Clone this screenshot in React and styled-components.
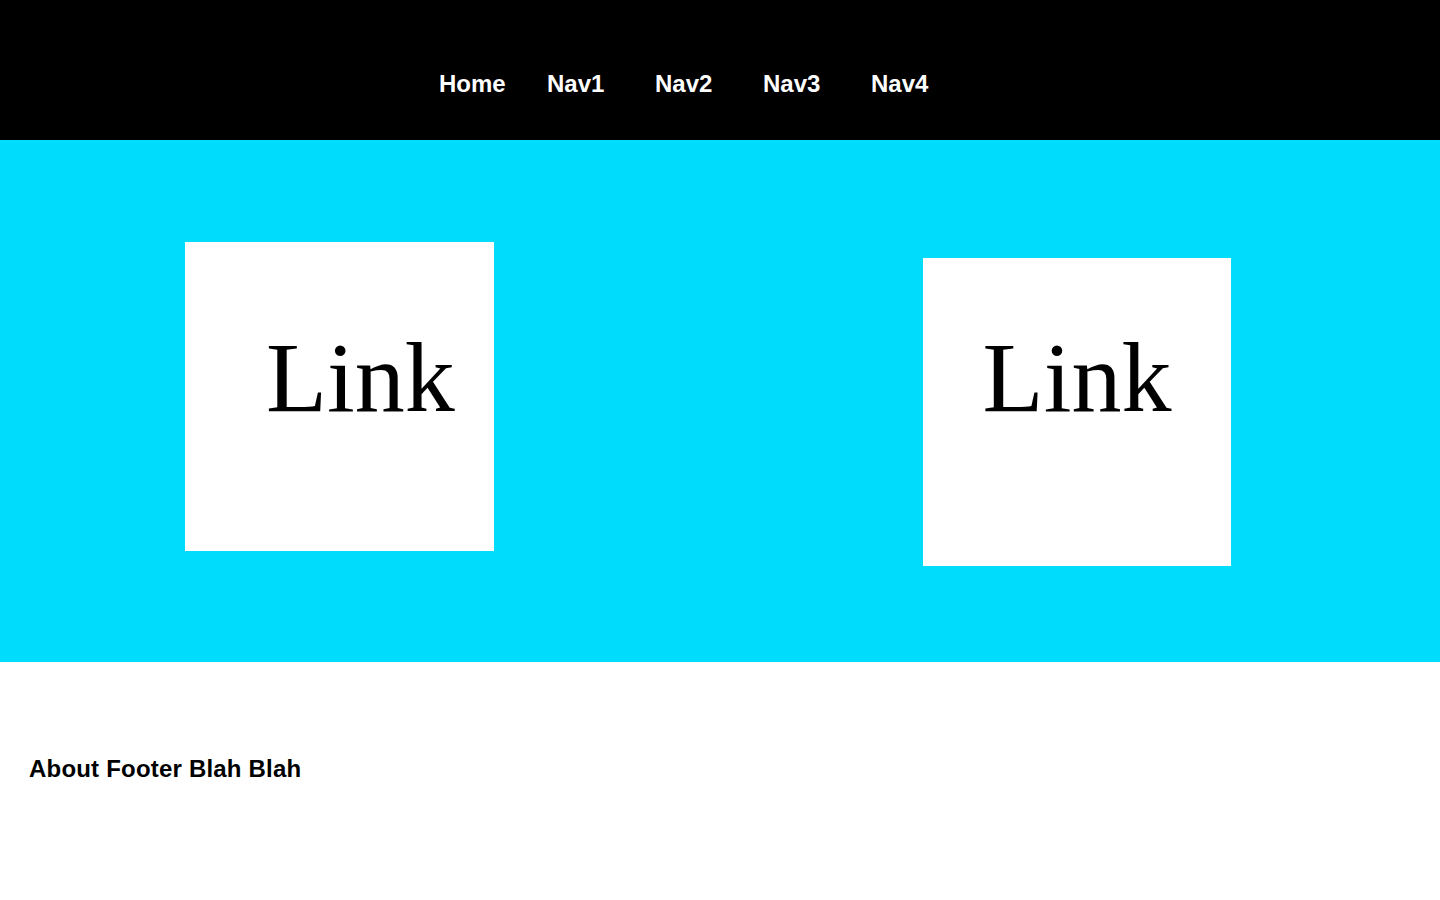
import React from "react";
import styled, { createGlobalStyle } from "styled-components";

const GlobalStyle = createGlobalStyle`
  html, body {
    margin: 0;
    padding: 0;
    background: #ffffff;
  }
  body {
    font-family: "Liberation Sans", Arial, sans-serif;
  }
  * {
    box-sizing: border-box;
  }
`;

// Top navigation bar
const Header = styled.header`
  height: 140px;
  background: #000000;
  padding: 72px 0 0 439px;
`;

const NavList = styled.ul`
  display: flex;
  list-style: none;
  margin: 0;
  padding: 0;
`;

const NavItem = styled.li`
  width: 108px;
  font-size: 24px;
  line-height: 24px;
  font-weight: bold;
  color: #ffffff;
  white-space: nowrap;
`;

// Cyan hero with the two link tiles
const Hero = styled.section`
  height: 522px;
  background: #00ddfc;
  display: flex;
  align-items: flex-start;
  padding: 102px 0 0 185px;
  gap: 429px;
`;

const Tile = styled.div`
  width: ${(p) => p.$size}px;
  height: ${(p) => p.$size}px;
  margin-top: ${(p) => p.$offset || 0}px;
  background: #ffffff;
  padding: ${(p) => p.$textTop}px 0 0 ${(p) => p.$textLeft || 0}px;
  text-align: ${(p) => (p.$centered ? "center" : "left")};
  font-family: "Liberation Serif", "Times New Roman", serif;
  font-size: 100px;
  line-height: 100px;
  color: #000000;
`;

// Footer
const Footer = styled.footer`
  height: 238px;
  padding: 95px 0 0 29px;
`;

const FooterText = styled.h3`
  margin: 0;
  font-size: 24px;
  line-height: 24px;
  font-weight: bold;
  letter-spacing: 0.2px;
  color: #000000;
`;

const navItems = ["Home", "Nav1", "Nav2", "Nav3", "Nav4"];

export default function App() {
  return (
    <>
      <GlobalStyle />
      <Header>
        <NavList>
          {navItems.map((item) => (
            <NavItem key={item}>{item}</NavItem>
          ))}
        </NavList>
      </Header>
      <Hero>
        <Tile $size={309} $textTop={86} $textLeft={81}>
          Link
        </Tile>
        <Tile $size={308} $offset={16} $textTop={70} $centered>
          Link
        </Tile>
      </Hero>
      <Footer>
        <FooterText>About Footer Blah Blah</FooterText>
      </Footer>
    </>
  );
}
